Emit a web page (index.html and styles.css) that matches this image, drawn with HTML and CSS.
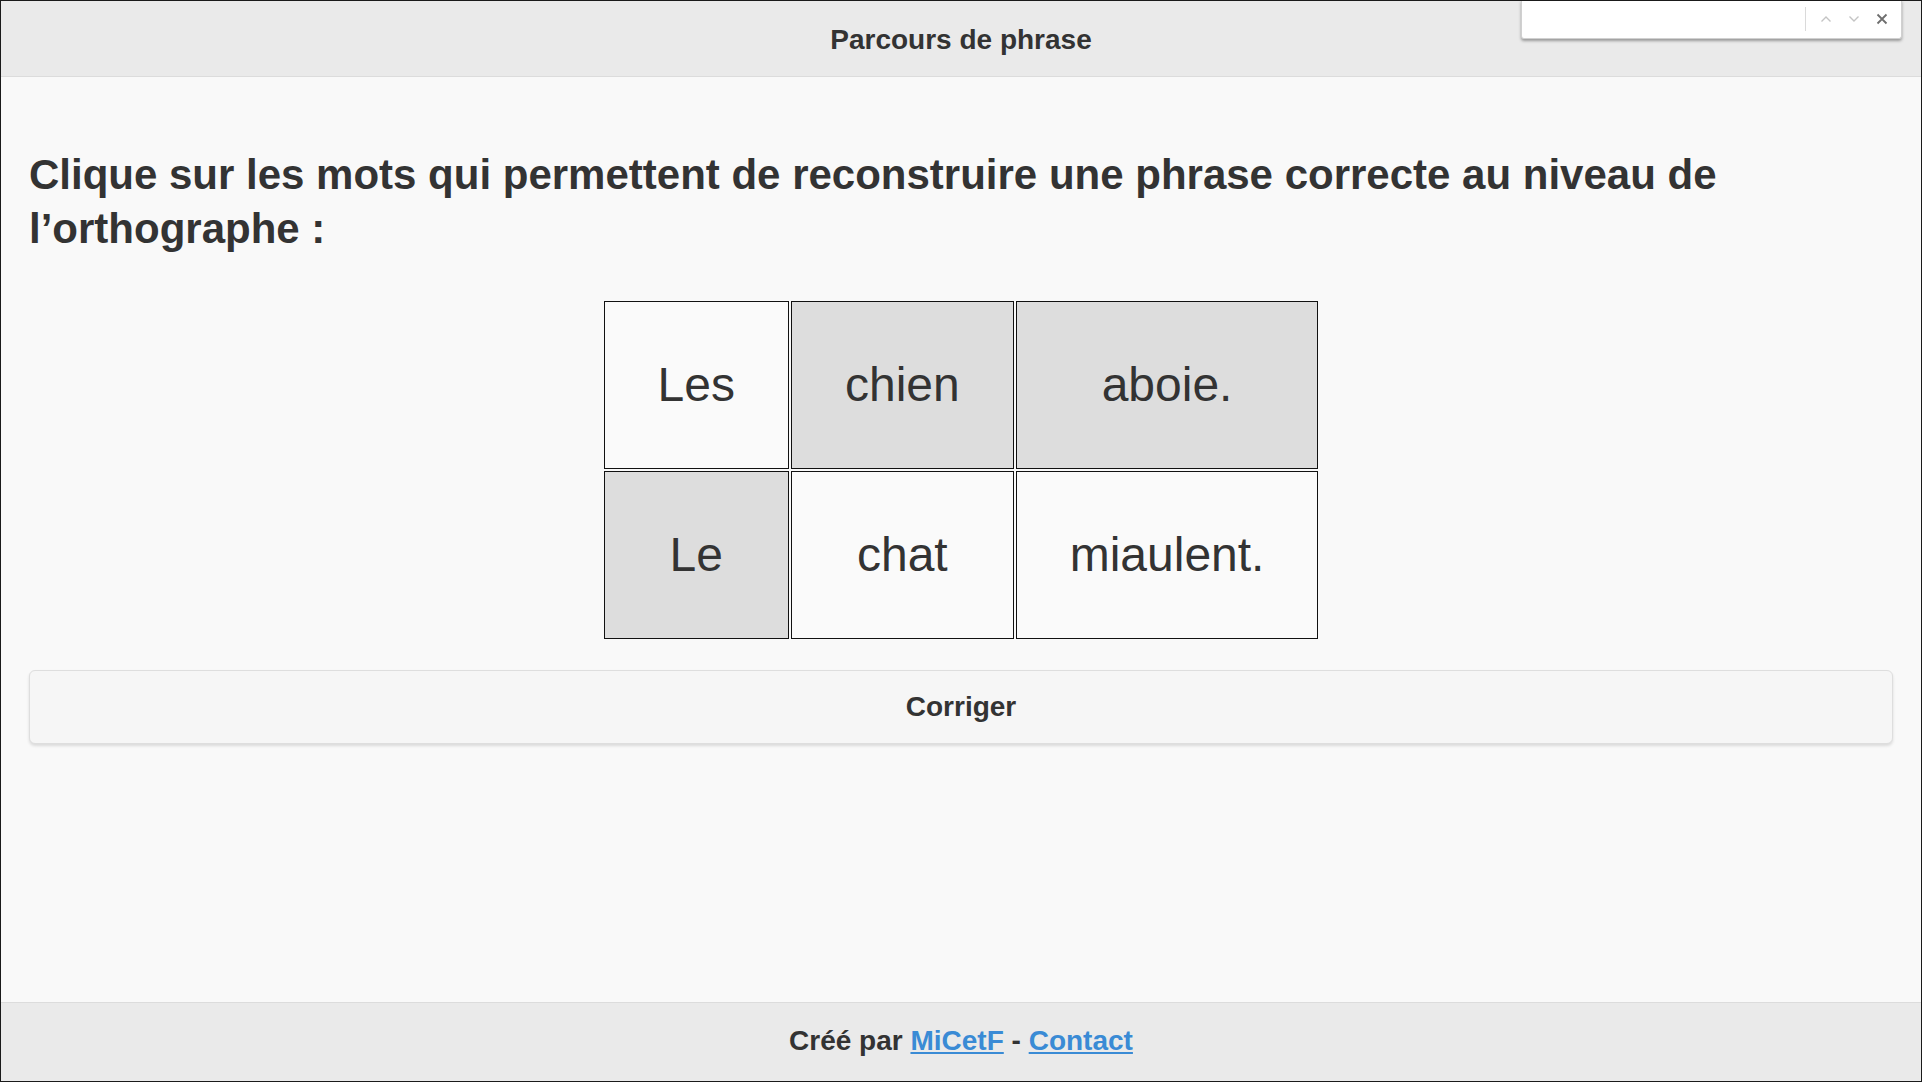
FILE: index.html
```html
<!DOCTYPE html>
<html lang="fr">
<head>
<meta charset="utf-8">
<title>Parcours de phrase</title>
<link rel="stylesheet" href="styles.css">
</head>
<body>
<div class="frame">
  <header class="topbar">Parcours de phrase</header>
  <main class="content">
    <h1 class="question">Clique sur les mots qui permettent de reconstruire une phrase correcte au niveau de l’orthographe :</h1>
    <table class="words">
      <tr>
        <td class="cell">Les</td>
        <td class="cell picked">chien</td>
        <td class="cell picked">aboie.</td>
      </tr>
      <tr>
        <td class="cell picked">Le</td>
        <td class="cell">chat</td>
        <td class="cell">miaulent.</td>
      </tr>
    </table>
    <button class="check" type="button">Corriger</button>
  </main>
  <footer class="bottombar">Créé par <a href="#">MiCetF</a> - <a href="#">Contact</a></footer>

  <div class="findbar">
    <div class="find-input"></div>
    <div class="find-sep"></div>
    <svg class="find-icon up" width="12" height="8" viewBox="0 0 12 8"><path d="M1.5 6.5 L6 2 L10.5 6.5" fill="none" stroke="#c4c4c4" stroke-width="1.4"/></svg>
    <svg class="find-icon down" width="12" height="8" viewBox="0 0 12 8"><path d="M1.5 1.5 L6 6 L10.5 1.5" fill="none" stroke="#c4c4c4" stroke-width="1.4"/></svg>
    <svg class="find-icon close" width="12" height="12" viewBox="0 0 12 12"><path d="M1.5 1.5 L10.5 10.5 M10.5 1.5 L1.5 10.5" fill="none" stroke="#6e6e6e" stroke-width="1.8"/></svg>
  </div>
</div>
</body>
</html>
```

FILE: styles.css
```css
html, body {
  margin: 0;
  padding: 0;
  height: 100%;
}
body {
  font-family: "Liberation Sans", Arial, sans-serif;
  color: #333;
  background: #f9f9f9;
}
.frame {
  position: relative;
  box-sizing: border-box;
  height: 1082px;
  border: 1px solid #1a1a1a;
  display: flex;
  flex-direction: column;
  overflow: hidden;
}
.topbar {
  height: 76px;
  flex: 0 0 auto;
  box-sizing: border-box;
  padding-top: 2px;
  background: #eaeaea;
  border-bottom: 1px solid #dcdcdc;
  display: flex;
  align-items: center;
  justify-content: center;
  font-weight: bold;
  font-size: 28px;
  color: #333;
}
.content {
  flex: 1 1 auto;
  background: #f9f9f9;
  padding: 0 28px;
  display: flex;
  flex-direction: column;
  align-items: stretch;
}
.question {
  margin: 71px 0 43px;
  font-size: 42px;
  line-height: 54px;
  font-weight: bold;
  color: #333;
}
.words {
  align-self: center;
  border-collapse: separate;
  border-spacing: 2px;
  margin: 0 0 29px;
}
.cell {
  border: 1px solid #111;
  background: #fafafa;
  font-size: 48px;
  line-height: 55px;
  padding: 55px 53px 56px;
  text-align: center;
  color: #333;
  white-space: nowrap;
}
.cell.picked {
  background: #dddddd;
}
.check {
  display: block;
  width: 100%;
  height: 74px;
  font-family: "Liberation Sans", Arial, sans-serif;
  font-size: 28px;
  font-weight: bold;
  color: #333;
  background: #f6f6f6;
  border: 1px solid #dedede;
  border-radius: 6px;
  box-shadow: 0 2px 3px rgba(0, 0, 0, 0.12);
}
.bottombar {
  height: 79px;
  flex: 0 0 auto;
  box-sizing: border-box;
  padding-bottom: 2px;
  background: #eaeaea;
  border-top: 1px solid #dcdcdc;
  display: flex;
  align-items: center;
  justify-content: center;
  font-weight: bold;
  font-size: 28px;
  color: #333;
  white-space: pre;
}
.bottombar a {
  color: #3a8bd5;
  text-decoration: underline;
}
.findbar {
  position: absolute;
  top: -1px;
  right: 19px;
  width: 381px;
  height: 39px;
  box-sizing: border-box;
  background: #fff;
  border: 1px solid #d0d0d0;
  border-top: none;
  border-radius: 0 0 3px 3px;
  box-shadow: 0 2px 3px rgba(0, 0, 0, 0.35);
  display: flex;
  align-items: center;
  padding: 0 13px 0 0;
}
.find-input {
  flex: 1 1 auto;
}
.find-sep {
  width: 1px;
  height: 24px;
  background: #dadada;
  margin-right: 14px;
}
.find-icon {
  display: block;
}
.find-icon.up {
  margin-right: 16px;
}
.find-icon.down {
  margin-right: 14px;
}
.find-icon.close {
  margin-left: 2px;
}
```
